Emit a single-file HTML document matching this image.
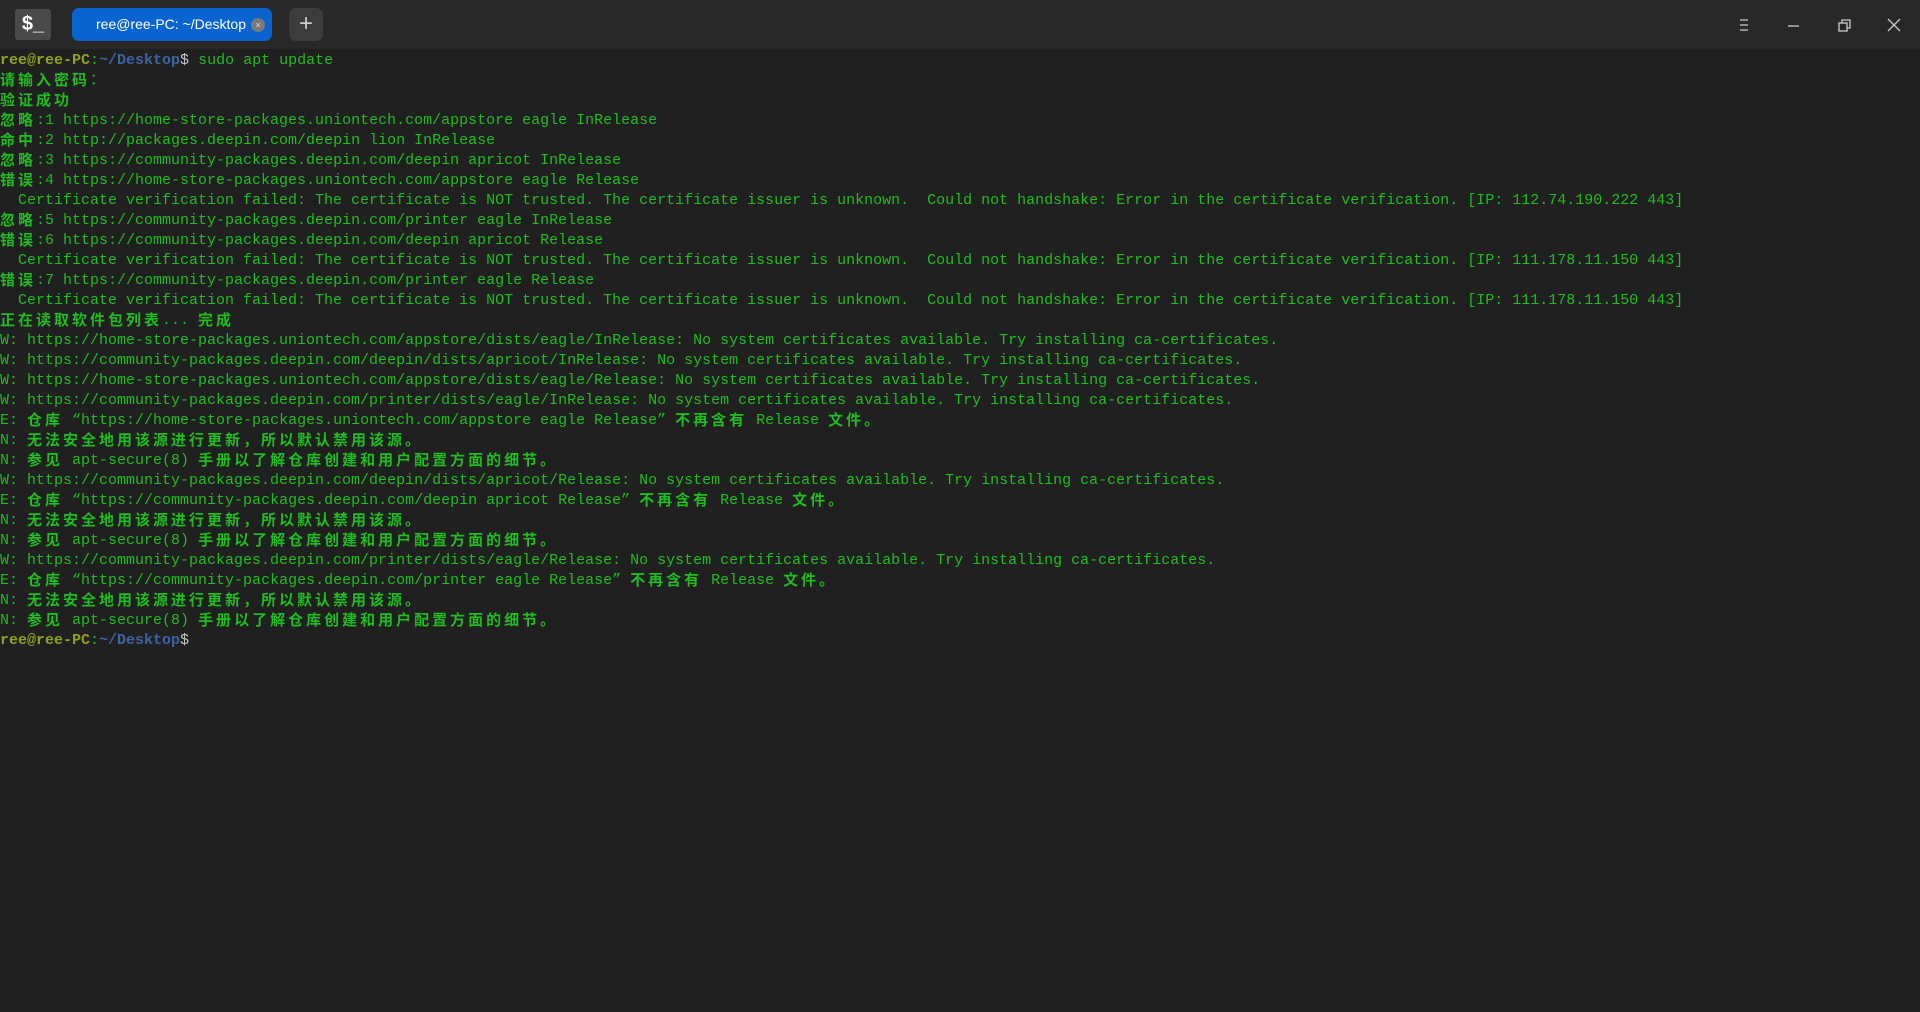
<!DOCTYPE html>
<html><head><meta charset="utf-8"><style>
html,body{margin:0;padding:0;width:1920px;height:1012px;background:#202020;overflow:hidden}
.tb{position:absolute;left:0;top:0;width:1920px;height:49px;background:#282828}
.icon{position:absolute;left:15px;top:9px;width:36px;height:31px;background:#4a4a4a;border-radius:3px;color:#fff;font:bold 20px "Liberation Sans",sans-serif;line-height:31px;text-align:center}
.tab{position:absolute;left:72px;top:8px;width:200px;height:33px;background:#0a64cf;border-radius:7px;color:#fff;font:14px "Liberation Sans",sans-serif;line-height:33px}
.tab span{position:absolute;left:24px}
.tab i{position:absolute;right:7px;top:10px;width:14px;height:14px;border-radius:50%;background:#7a7a7a;color:#ddd;font:normal 9px sans-serif;line-height:14px;text-align:center}
.plus{position:absolute;left:289px;top:8px;width:34px;height:33px;background:#3c3c3c;border-radius:7px;color:#ccc;font:24px "Liberation Sans",sans-serif;line-height:31px;text-align:center}
.ctl{position:absolute;top:15px}
.t{position:absolute;left:0;top:51px;font:15px "Liberation Mono","Noto Sans CJK SC",monospace;color:#1fbd1f;white-space:normal}
.t div{height:20px;line-height:20px;overflow:visible;white-space:pre}
.c{font-family:"Noto Sans CJK SC",sans-serif;font-weight:bold;letter-spacing:3px;line-height:20px;display:inline-block;height:20px;vertical-align:top;position:relative;top:-1px}
.y{color:#8fa21c;font-weight:bold}
.b{color:#3f64a4;font-weight:bold}
.w{color:#c8c8c8}
</style></head><body>
<div class="tb"></div>
<div class="icon">$_</div>
<div class="tab"><span>ree@ree-PC: ~/Desktop</span><i>×</i></div>
<div class="plus">+</div>
<svg class="ctl" style="left:1736px" width="16" height="20"><path d="M4 5h8M4 10h8M4 15h8" stroke="#ccc" stroke-width="1.3"/></svg>
<svg class="ctl" style="left:1786px" width="16" height="20"><path d="M2 11h11" stroke="#ccc" stroke-width="1.3"/></svg>
<svg class="ctl" style="left:1836px" width="16" height="20"><rect x="3" y="8" width="8" height="8" fill="none" stroke="#ccc" stroke-width="1.3"/><path d="M6 8V5h8v8h-3" fill="none" stroke="#ccc" stroke-width="1.3"/></svg>
<svg class="ctl" style="left:1886px" width="16" height="20"><path d="M2 4l12 12M14 4L2 16" stroke="#ccc" stroke-width="1.3"/></svg>
<div class="t">
<div><span class="y">ree@ree-PC</span>:<span class="b">~/Desktop</span><span class="w">$</span> sudo apt update</div>
<div><span class="c">请输入密码</span>：</div>
<div><span class="c">验证成功</span></div>
<div><span class="c">忽略</span>:1 https://home-store-packages.uniontech.com/appstore eagle InRelease</div>
<div><span class="c">命中</span>:2 http://packages.deepin.com/deepin lion InRelease</div>
<div><span class="c">忽略</span>:3 https://community-packages.deepin.com/deepin apricot InRelease</div>
<div><span class="c">错误</span>:4 https://home-store-packages.uniontech.com/appstore eagle Release</div>
<div>  Certificate verification failed: The certificate is NOT trusted. The certificate issuer is unknown.  Could not handshake: Error in the certificate verification. [IP: 112.74.190.222 443]</div>
<div><span class="c">忽略</span>:5 https://community-packages.deepin.com/printer eagle InRelease</div>
<div><span class="c">错误</span>:6 https://community-packages.deepin.com/deepin apricot Release</div>
<div>  Certificate verification failed: The certificate is NOT trusted. The certificate issuer is unknown.  Could not handshake: Error in the certificate verification. [IP: 111.178.11.150 443]</div>
<div><span class="c">错误</span>:7 https://community-packages.deepin.com/printer eagle Release</div>
<div>  Certificate verification failed: The certificate is NOT trusted. The certificate issuer is unknown.  Could not handshake: Error in the certificate verification. [IP: 111.178.11.150 443]</div>
<div><span class="c">正在读取软件包列表</span>... <span class="c">完成</span></div>
<div>W: https://home-store-packages.uniontech.com/appstore/dists/eagle/InRelease: No system certificates available. Try installing ca-certificates.</div>
<div>W: https://community-packages.deepin.com/deepin/dists/apricot/InRelease: No system certificates available. Try installing ca-certificates.</div>
<div>W: https://home-store-packages.uniontech.com/appstore/dists/eagle/Release: No system certificates available. Try installing ca-certificates.</div>
<div>W: https://community-packages.deepin.com/printer/dists/eagle/InRelease: No system certificates available. Try installing ca-certificates.</div>
<div>E: <span class="c">仓库</span> “https://home-store-packages.uniontech.com/appstore eagle Release” <span class="c">不再含有</span> Release <span class="c">文件。</span></div>
<div>N: <span class="c">无法安全地用该源进行更新，所以默认禁用该源。</span></div>
<div>N: <span class="c">参见</span> apt-secure(8) <span class="c">手册以了解仓库创建和用户配置方面的细节。</span></div>
<div>W: https://community-packages.deepin.com/deepin/dists/apricot/Release: No system certificates available. Try installing ca-certificates.</div>
<div>E: <span class="c">仓库</span> “https://community-packages.deepin.com/deepin apricot Release” <span class="c">不再含有</span> Release <span class="c">文件。</span></div>
<div>N: <span class="c">无法安全地用该源进行更新，所以默认禁用该源。</span></div>
<div>N: <span class="c">参见</span> apt-secure(8) <span class="c">手册以了解仓库创建和用户配置方面的细节。</span></div>
<div>W: https://community-packages.deepin.com/printer/dists/eagle/Release: No system certificates available. Try installing ca-certificates.</div>
<div>E: <span class="c">仓库</span> “https://community-packages.deepin.com/printer eagle Release” <span class="c">不再含有</span> Release <span class="c">文件。</span></div>
<div>N: <span class="c">无法安全地用该源进行更新，所以默认禁用该源。</span></div>
<div>N: <span class="c">参见</span> apt-secure(8) <span class="c">手册以了解仓库创建和用户配置方面的细节。</span></div>
<div><span class="y">ree@ree-PC</span>:<span class="b">~/Desktop</span><span class="w">$</span></div>
</div>
</body></html>
